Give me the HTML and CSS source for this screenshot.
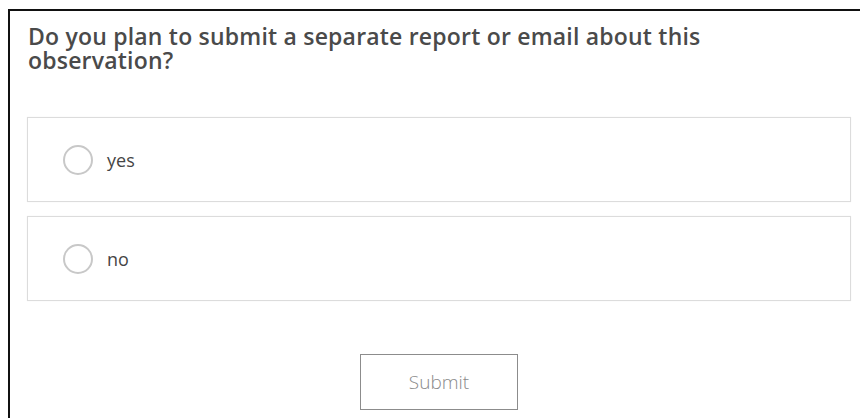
FILE: index.html
```html
<!DOCTYPE html>
<html lang="en">
<head>
<meta charset="utf-8">
<title>Observation follow-up</title>
<link rel="stylesheet" href="styles.css">
</head>
<body>
<form class="frame">
  <h1 class="question">Do you plan to submit a separate report or email about this observation?</h1>
  <div class="choices">
    <label class="choice">
      <span class="radio"></span>
      <span class="choice-text">yes</span>
    </label>
    <label class="choice">
      <span class="radio"></span>
      <span class="choice-text">no</span>
    </label>
  </div>
  <div class="actions">
    <button type="button" class="submit">Submit</button>
  </div>
</form>
</body>
</html>
```

FILE: styles.css
```css
html, body {
  margin: 0;
  padding: 0;
  background: #ffffff;
  height: 100%;
  overflow: hidden;
}

body {
  font-family: "Open Sans", Lato, sans-serif;
}

/* outer panel: only the top and left edges are framed */
.frame {
  box-sizing: border-box;
  display: flex;
  flex-direction: column;
  height: calc(100% - 9px);
  margin: 9px 0 0 8px;
  border-top: 2px solid #111111;
  border-left: 2px solid #111111;
  padding: 13px 9px 0 17px;
}

.question {
  margin: 0 0 0 1px;
  max-width: 740px;
  font-size: 23px;
  line-height: 24px;
  letter-spacing: 0.2px;
  font-weight: 600;
  color: #4a4a4a;
}

.choices {
  display: flex;
  flex-direction: column;
  gap: 14px;
  margin-top: 45px;
}

.choice {
  display: flex;
  align-items: center;
  height: 83px;
  padding-left: 35px;
  border: 1px solid #dcdcdc;
  box-shadow: 0 0 1px rgba(0, 0, 0, 0.08);
}

.radio {
  box-sizing: border-box;
  width: 30px;
  height: 30px;
  border: 2px solid #c8c8c8;
  border-radius: 50%;
  flex: none;
}

.choice-text {
  margin-left: 14px;
  font-size: 18px;
  color: #454545;
}

.actions {
  display: flex;
  justify-content: center;
  margin-top: 53px;
}

.submit {
  width: 158px;
  height: 56px;
  background: #ffffff;
  border: 1px solid #8c8c8c;
  font-family: "Open Sans", Lato, sans-serif;
  font-size: 19px;
  font-weight: 300;
  color: #8a8a8a;
}
```
